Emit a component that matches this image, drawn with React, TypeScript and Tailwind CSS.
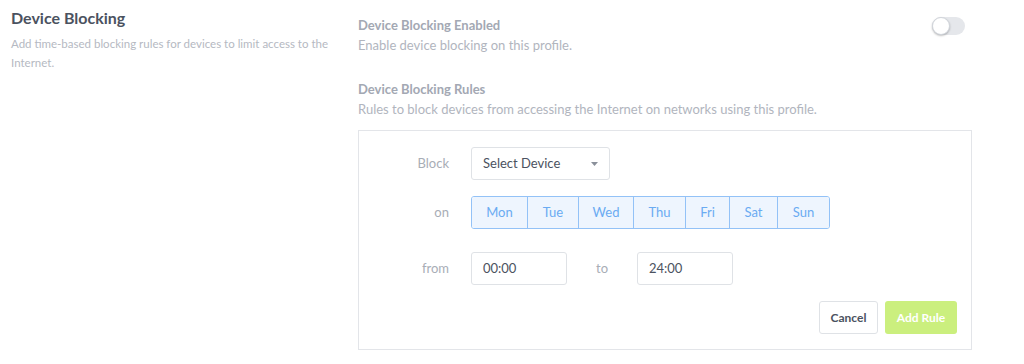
import React from 'react';

const DAYS = [
  { label: 'Mon', w: 'w-[55px]' },
  { label: 'Tue', w: 'w-[51px]' },
  { label: 'Wed', w: 'w-[55px]' },
  { label: 'Thu', w: 'w-[52px]' },
  { label: 'Fri', w: 'w-[44px]' },
  { label: 'Sat', w: 'w-[48px]' },
  { label: 'Sun', w: 'w-[52px]' },
];

function Toggle() {
  return (
    <div className="relative h-[18px] w-[33px] rounded-full bg-[#e5e7eb]">
      <div className="absolute left-0 top-0 h-[18px] w-[18px] rounded-full border border-[#d1d5db] bg-white shadow-[0_1px_2px_rgba(0,0,0,0.25)]" />
    </div>
  );
}

export default function App() {
  return (
    <div className="flex h-[364px] w-[1024px] bg-white font-['Lato','Open_Sans',sans-serif] antialiased">
      <div className="w-[358px] shrink-0 pl-[11px] pt-[6px]">
        <h2 className="text-[16px] font-bold leading-[24px] text-[#4b5260]">Device Blocking</h2>
        <p className="mt-[4px] w-[320px] text-[11.5px] leading-[19px] text-[#b5b9c2]">
          Add time-based blocking rules for devices to limit access to the Internet.
        </p>
      </div>

      <div className="w-[614px] shrink-0 pt-[15px]">
        <div className="flex items-start justify-between">
          <div>
            <div className="text-[13px] font-bold leading-[20px] text-[#a3a8b3]">Device Blocking Enabled</div>
            <div className="text-[13px] leading-[20px] text-[#b1b5be]">Enable device blocking on this profile.</div>
          </div>
          <div className="mr-[7px] mt-[2px]">
            <Toggle />
          </div>
        </div>

        <div className="mt-[24px]">
          <div className="text-[13px] font-bold leading-[20px] text-[#a3a8b3]">Device Blocking Rules</div>
          <div className="text-[13px] leading-[20px] text-[#b1b5be]">
            Rules to block devices from accessing the Internet on networks using this profile.
          </div>
        </div>

        <div className="mt-[11px] flex flex-col border border-[#e3e5e9] pb-[15px] pt-[16px]">
          <div className="flex items-center">
            <div className="w-[90px] text-right text-[13px] text-[#a8adb6]">Block</div>
            <div className="ml-[22px] flex h-[33px] w-[139px] items-center justify-between rounded-[3px] border border-[#dfe2e6] pl-[11px] pr-[11px]">
              <span className="text-[13px] text-[#4b5260]">Select Device</span>
              <svg width="7" height="4" viewBox="0 0 7 4">
                <path d="M0 0h7L3.5 4z" fill="#8a909a" />
              </svg>
            </div>
          </div>

          <div className="mt-[16px] flex items-center">
            <div className="w-[90px] text-right text-[13px] text-[#a8adb6]">on</div>
            <div className="ml-[22px] flex overflow-hidden rounded-[3px] border border-[#93c2f7]">
              {DAYS.map((d, i) => (
                <div
                  key={d.label}
                  className={`flex h-[31px] items-center justify-center bg-[#eef5fe] text-[13px] text-[#6aabf2] ${d.w} ${i > 0 ? 'border-l border-[#93c2f7]' : ''}`}
                >
                  {d.label}
                </div>
              ))}
            </div>
          </div>

          <div className="mt-[23px] flex items-center">
            <div className="w-[90px] text-right text-[13px] text-[#a8adb6]">from</div>
            <div className="ml-[22px] flex h-[33px] w-[96px] items-center rounded-[3px] border border-[#dfe2e6] pl-[11px] text-[13px] text-[#4b5260]">
              00:00
            </div>
            <div className="w-[70px] text-center text-[13px] text-[#a8adb6]">to</div>
            <div className="flex h-[33px] w-[96px] items-center rounded-[3px] border border-[#dfe2e6] pl-[11px] text-[13px] text-[#4b5260]">
              24:00
            </div>
          </div>

          <div className="mt-[16px] flex justify-end gap-[7px] pr-[14px]">
            <button className="h-[33px] w-[59px] rounded-[3px] border border-[#dfe2e6] bg-white text-[12px] font-bold text-[#4b5260]">
              Cancel
            </button>
            <button className="h-[33px] w-[72px] rounded-[3px] bg-[#cbef7e] text-[12px] font-bold text-white">
              Add Rule
            </button>
          </div>
        </div>
      </div>
    </div>
  );
}
